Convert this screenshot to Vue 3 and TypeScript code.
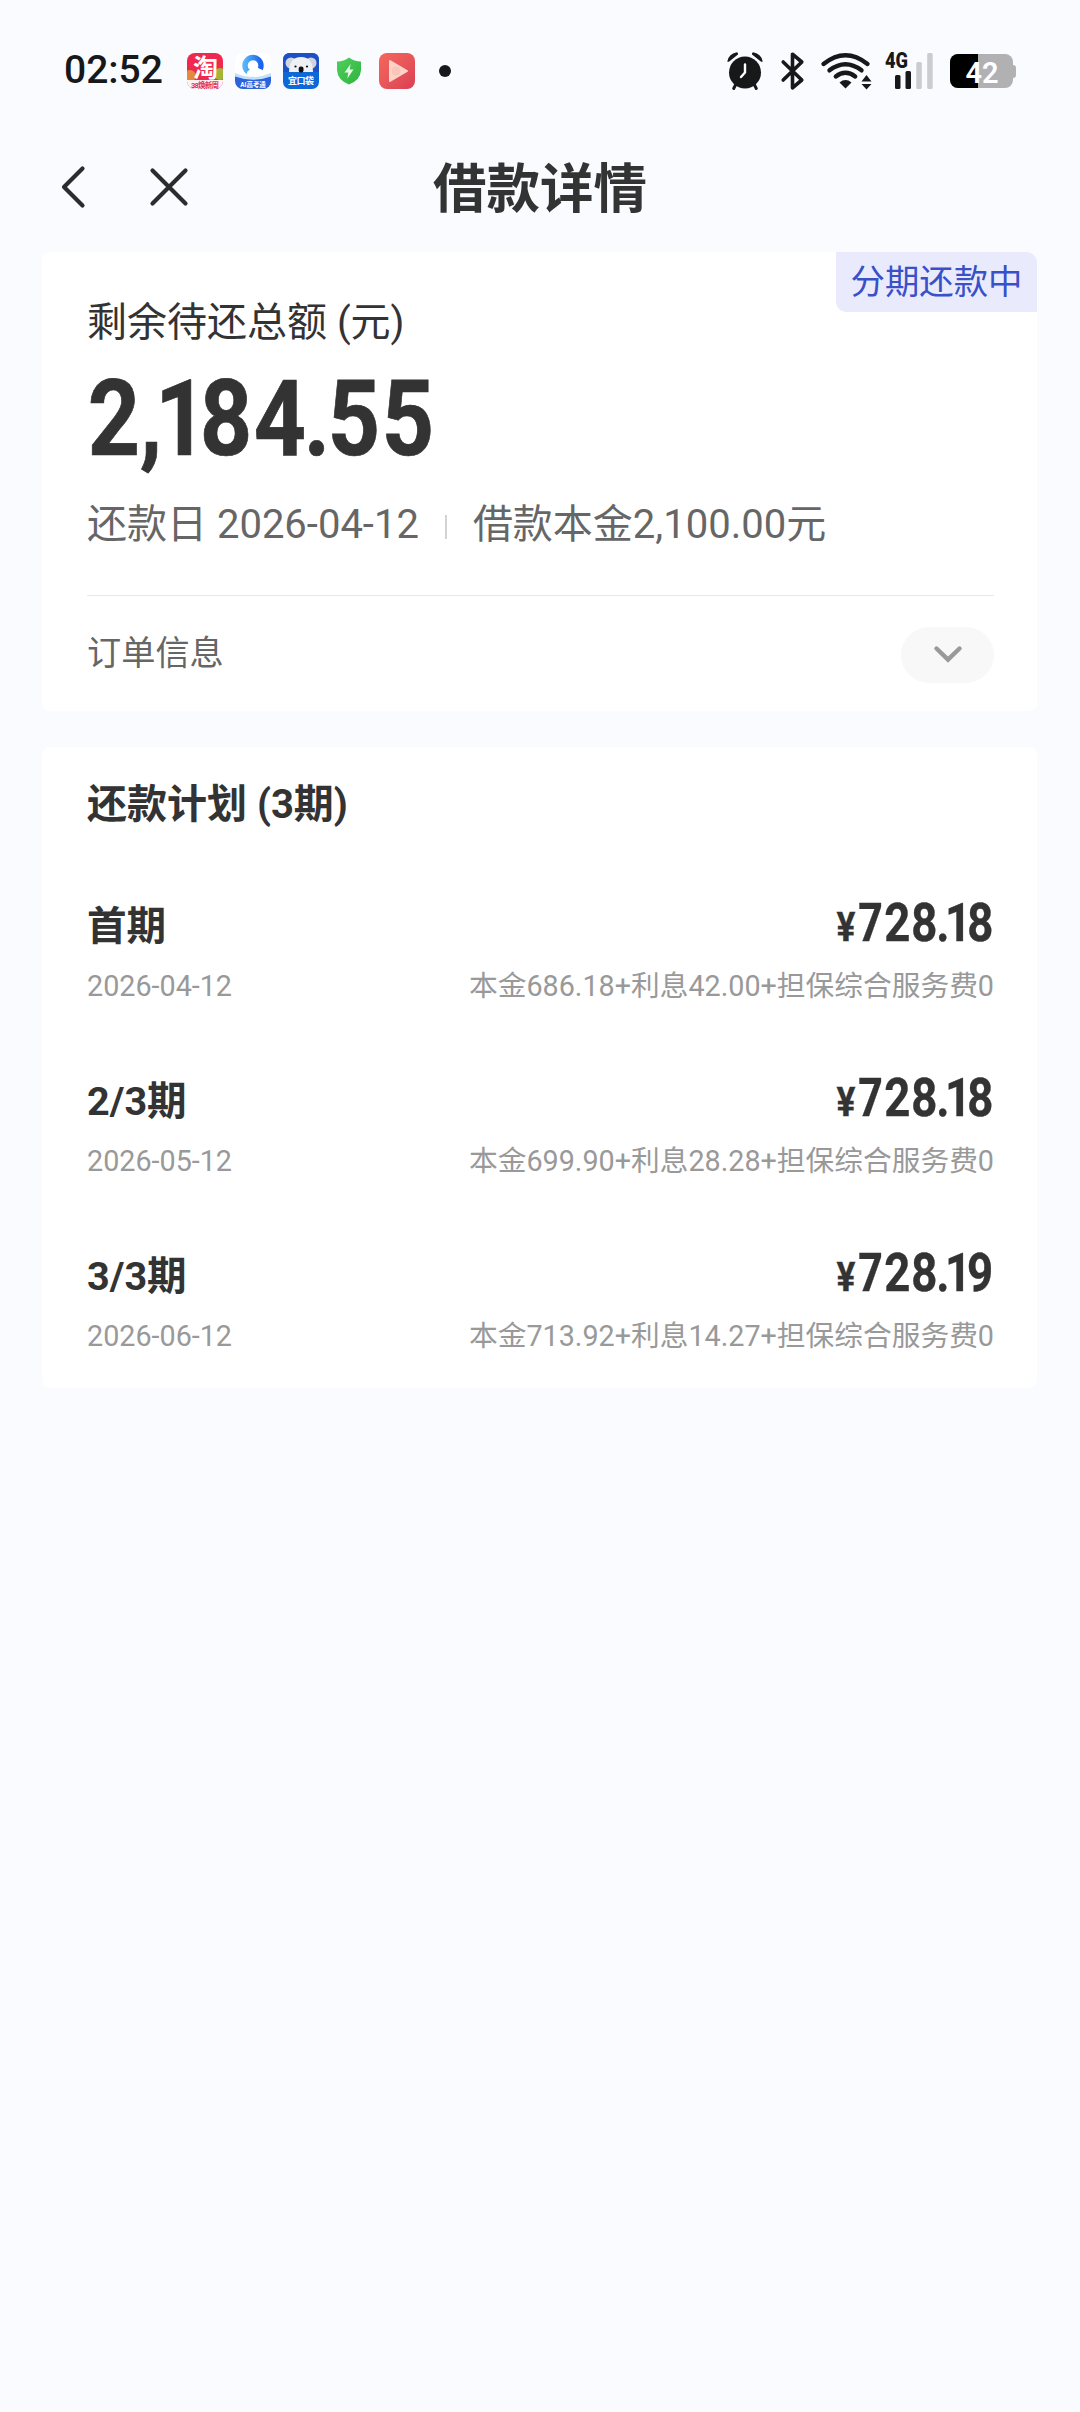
<script setup lang="ts">
interface Installment {
  name: string
  date: string
  amount: string
  detail: string
}

const total = '2,184.55'

const plan: Installment[] = [
  { name: '首期', date: '2026-04-12', amount: '728.18', detail: '本金686.18+利息42.00+担保综合服务费0' },
  { name: '2/3期', date: '2026-05-12', amount: '728.18', detail: '本金699.90+利息28.28+担保综合服务费0' },
  { name: '3/3期', date: '2026-06-12', amount: '728.19', detail: '本金713.92+利息14.27+担保综合服务费0' },
]

// Narrow characters take less room than the other figures.
function glyphClass(ch: string): string {
  if (ch === '1') return 'one'
  if (ch === ',' || ch === '.') return 'point'
  return 'figure'
}
</script>

<template>
  <div class="screen">
    <header class="status">
      <span class="time">02:52</span>
      <div class="apps">
        <svg class="app" viewBox="0 0 36 36">
          <defs>
            <clipPath id="tb"><rect width="36" height="36" rx="8" /></clipPath>
          </defs>
          <g clip-path="url(#tb)">
            <rect width="36" height="36" fill="#f0274f" />
            <circle cx="3" cy="23" r="6" fill="#e58a3c" />
            <circle cx="33" cy="21" r="6" fill="#a6b53a" />
            <rect y="27" width="36" height="9" fill="#fff3f3" />
          </g>
          <text x="18.5" y="23.500" text-anchor="middle" font-size="25" font-weight="700" fill="#fff">淘</text>
          <text x="18" y="34.5" text-anchor="middle" font-size="7.500" font-weight="700" fill="#e0305a" textLength="28">38焕新周</text>
        </svg>
        <svg class="app" viewBox="0 0 36 36">
          <defs>
            <clipPath id="qk"><rect width="36" height="36" rx="8" /></clipPath>
            <linearGradient id="ring" x1="0" y1="0" x2="1" y2="0">
              <stop offset="0" stop-color="#57b4f8" />
              <stop offset="1" stop-color="#1765ef" />
            </linearGradient>
          </defs>
          <g clip-path="url(#qk)">
            <rect width="36" height="36" fill="#fff" />
            <path d="M0 20Q18 28 36 20V36H0Z" fill="#bfe0fd" />
            <circle cx="18" cy="12.5" r="8" fill="none" stroke="url(#ring)" stroke-width="5.4" />
            <path d="M12 22Q11 17.500 16 16.500Q19 11 24 15.500Q30 17 28 22Q20 25 12 22Z" fill="#fff" />
            <path d="M0 23.500Q18 30 36 23.500V36H0Z" fill="#2c62dc" />
          </g>
          <text x="18" y="34" text-anchor="middle" font-size="6.4" font-weight="700" fill="#fff">AI高考通</text>
        </svg>
        <svg class="app" viewBox="0 0 36 36">
          <rect width="36" height="36" rx="7" fill="#0d68d8" />
          <path d="M0 19V7Q0 0 7 0H29Q36 0 36 7V19Z" fill="#1c50c4" />
          <circle cx="8" cy="10" r="5.5" fill="#cfd4dd" />
          <circle cx="28" cy="10" r="5.5" fill="#cfd4dd" />
          <path d="M6 19Q6 4 18 4Q30 4 30 19Z" fill="#eef0f4" />
          <rect x="15.7" y="13.5" width="4.8" height="6" rx="2" fill="#111" />
          <circle cx="12.5" cy="13.5" r="1.1" fill="#111" />
          <circle cx="24" cy="13.5" r="1.1" fill="#111" />
          <text x="18" y="30.500" text-anchor="middle" font-size="9" font-weight="700" fill="#fff" textLength="26">宜口袋</text>
        </svg>
        <svg class="shield" viewBox="0 0 24 28">
          <defs>
            <linearGradient id="sh" x1="0" y1="0" x2="1" y2="1">
              <stop offset="0" stop-color="#4fd05c" />
              <stop offset="1" stop-color="#2fb43f" />
            </linearGradient>
          </defs>
          <path d="M12 0.5Q17 4.3 24 4.6V13Q23.500 23 12 27.500Q.5 23 0 13V4.600Q7 4.300 12 .5Z" fill="url(#sh)" />
          <path d="M13.600 7L7.500 15.600H11.300L10.300 21.500L16.500 12.600H12.700Z" fill="#e8fbe8" />
        </svg>
        <svg class="app" viewBox="0 0 36 36">
          <defs>
            <linearGradient id="pl" x1="0" y1="0" x2="1" y2="1">
              <stop offset="0" stop-color="#f4685a" />
              <stop offset=".5" stop-color="#e9565a" />
              <stop offset="1" stop-color="#d93e52" />
            </linearGradient>
          </defs>
          <rect width="36" height="36" rx="8" fill="url(#pl)" />
          <path d="M11 8L28 18L11 28Z" fill="#fdd3c8" stroke="#fdd3c8" stroke-width="2" stroke-linejoin="round" />
          <circle cx="17" cy="18" r="4.500" fill="#fbc5bb" />
        </svg>
        <i class="dot"></i>
      </div>
      <div class="system">
        <svg class="alarm" viewBox="0 0 36 38" fill="none" stroke="#17181a">
          <circle cx="18" cy="20.500" r="16" fill="#17181a" stroke="none" />
          <path d="M0.300 9.500Q1.500 2 9.800 0.300Q11.500.8 11 2.500L2.500 9.200Q1.200 10.300.3 9.500Z" fill="#17181a" stroke="none" />
          <path d="M35.700 9.500Q34.500 2 26.200.3Q24.500.8 25 2.500L33.500 9.200Q34.800 10.300 35.700 9.500Z" fill="#17181a" stroke="none" />
          <path d="M9 32L6.700 36.500M27 32L29.300 36.500" stroke-width="3" stroke-linecap="round" />
          <path d="M18 12.500V20.500L14 25" stroke="#fff" stroke-width="2.400" stroke-linecap="round" stroke-linejoin="round" />
        </svg>
        <svg class="bluetooth" viewBox="0 0 23 38" fill="none" stroke="#17181a" stroke-width="3.600" stroke-linecap="round" stroke-linejoin="round">
          <path d="M2.200 10L20.800 28L11.500 35.800V2.200L20.800 10L2.200 28" />
        </svg>
        <svg class="wifi" viewBox="0 0 51 37" fill="none" stroke="#17181a" stroke-width="4.400" stroke-linecap="round">
          <path d="M2.500 11Q24.500 -6.500 46.500 11" />
          <path d="M8.500 17.300Q24.500 5.200 40.500 17.300" />
          <path d="M14.800 23.400Q24.500 16 34.200 23.400" />
          <path d="M24.500 35.500L18.500 29.400Q24.500 24.600 30.500 29.400Z" fill="#17181a" stroke="none" />
          <path d="M45.500 22L50.500 28.500H40.500ZM45.500 36.500L50.500 31H40.500Z" fill="#17181a" stroke="none" />
        </svg>
        <svg class="signal" viewBox="0 0 49 38">
          <text x="0" y="15.500" font-size="21.500" font-weight="900" fill="#17181a" textLength="23" lengthAdjust="spacingAndGlyphs">4G</text>
          <rect x="10" y="23" width="5.500" height="14" rx="1.500" fill="#17181a" />
          <rect x="20.500" y="19" width="5.500" height="18" rx="1.500" fill="#17181a" />
          <rect x="31.300" y="10" width="5.500" height="27" rx="1.500" fill="#cbccd0" />
          <rect x="42.200" y="1" width="5.500" height="36" rx="1.500" fill="#cbccd0" />
        </svg>
        <svg class="battery" viewBox="0 0 67 34">
          <defs>
            <clipPath id="bat"><rect width="63" height="34" rx="8" /></clipPath>
          </defs>
          <rect x="60" y="11" width="6" height="13" rx="3" fill="#b1b1b3" />
          <g clip-path="url(#bat)">
            <rect width="63" height="34" fill="#b1b1b3" />
            <rect width="28" height="34" fill="#000" />
          </g>
          <text x="32" y="28.500" text-anchor="middle" font-size="29" font-weight="600" fill="#fff">42</text>
        </svg>
      </div>
    </header>

    <nav class="nav">
      <div class="actions">
        <svg class="back" viewBox="0 0 24 42" fill="none" stroke="#2b2c2e" stroke-width="4.200" stroke-linecap="round" stroke-linejoin="round">
          <path d="M21.500 2.500L3 21L21.500 39.500" />
        </svg>
        <svg class="close" viewBox="0 0 38 38" fill="none" stroke="#2b2c2e" stroke-width="4.200" stroke-linecap="round">
          <path d="M2.500 2.500L35.500 35.500M35.500 2.500L2.500 35.500" />
        </svg>
      </div>
      <h1>借款详情</h1>
    </nav>

    <section class="card summary">
      <span class="tag">分期还款中</span>
      <div class="label">剩余待还总额 (元)</div>
      <div class="amount total"><span v-for="(ch, i) in total" :key="i" :class="glyphClass(ch)">{{ ch }}</span></div>
      <div class="meta">
        <span>还款日 2026-04-12</span>
        <i class="bar"></i>
        <span>借款本金2,100.00元</span>
      </div>
      <div class="order">
        <span>订单信息</span>
        <button class="toggle" type="button">
          <svg viewBox="0 0 28 17" fill="none" stroke="#999" stroke-width="4.400" stroke-linecap="round">
            <path d="M2.500 2.500L14 13.600L25.500 2.500" />
          </svg>
        </button>
      </div>
    </section>

    <section class="card schedule">
      <h2>还款计划 (3期)</h2>
      <div v-for="item in plan" :key="item.name" class="item">
        <div class="row main">
          <strong>{{ item.name }}</strong>
          <div class="amount"><span class="yen">¥</span><span v-for="(ch, i) in item.amount" :key="i" :class="glyphClass(ch)">{{ ch }}</span></div>
        </div>
        <div class="row sub">
          <span>{{ item.date }}</span>
          <span>{{ item.detail }}</span>
        </div>
      </div>
    </section>
  </div>
</template>

<style>
body {
  background: #fafbff;
}
</style>

<style scoped>
.screen {
  box-sizing: border-box;
  width: 1080px;
  height: 2412px;
  overflow: hidden;
  background: #fafbff;
  color: #333;
  font-family: Roboto, 'Noto Sans CJK SC', sans-serif;
}
svg {
  display: block;
  flex: none;
  overflow: visible;
}
.status {
  display: flex;
  align-items: center;
  height: 142px;
  padding: 0 63px 0 64px;
}
.time {
  width: 123px;
  font-size: 39px;
  line-height: 46px;
  padding-bottom: 2px;
  font-weight: 500;
  color: #17181a;
}
.apps {
  display: flex;
  align-items: center;
  gap: 12px;
}
.app {
  width: 36px;
  height: 36px;
}
.shield {
  width: 24px;
  height: 28px;
  margin: 0 6px;
}
.dot {
  width: 12px;
  height: 12px;
  margin-left: 12px;
  border-radius: 50%;
  background: #17181a;
}
.system {
  display: flex;
  align-items: center;
  margin-left: auto;
}
.alarm {
  width: 36px;
  height: 38px;
  margin-right: 18px;
}
.bluetooth {
  width: 23px;
  height: 38px;
  margin-right: 17px;
}
.wifi {
  width: 51px;
  height: 37px;
  margin-right: 13px;
}
.signal {
  width: 49px;
  height: 38px;
  margin-right: 16px;
}
.battery {
  width: 67px;
  height: 34px;
}
.nav {
  display: grid;
  grid-template-columns: 1fr auto 1fr;
  align-items: center;
  height: 92px;
  margin-bottom: 18px;
}
.actions {
  display: flex;
  align-items: center;
  gap: 65px;
  padding: 0 0 2px 61px;
}
.back {
  width: 24px;
  height: 42px;
}
.close {
  width: 38px;
  height: 38px;
}
h1 {
  margin: 0;
  padding-top: 4px;
  font-size: 53.500px;
  line-height: 64px;
  font-weight: 700;
}
.card {
  position: relative;
  box-sizing: border-box;
  margin: 0 43px 0 42px;
  border-radius: 8px;
  background: #fff;
}
.summary {
  height: 459px;
  padding: 47px 43px 0 45px;
}
.tag {
  position: absolute;
  top: 0;
  right: 0;
  width: 201px;
  height: 60px;
  border-radius: 0 10px 0 10px;
  background: #e9ebfc;
  color: #3a50c8;
  font-size: 34.400px;
  line-height: 61px;
  text-align: center;
}
.label {
  font-size: 40px;
  line-height: 48px;
}
.amount {
  display: flex;
  align-items: baseline;
  width: max-content;
  margin-bottom: 3px;
  font-weight: 700;
  font-size: 53px;
  line-height: 54px;
  font-variant-numeric: proportional-nums;
  white-space: nowrap;
  -webkit-text-stroke: .007em #333;
  transform: scaleX(.86);
  transform-origin: 100% 50%;
}
.amount span {
  display: flex;
  justify-content: center;
}
.figure {
  width: .592em;
}
.one {
  width: .417em;
}
.point {
  width: .22em;
}
.yen {
  width: .624em;
  font-size: 41px;
}
.total {
  margin: 19px 0 0;
  font-size: 105.500px;
  line-height: 106px;
  transform: scaleX(.864);
  transform-origin: 0 50%;
}
.meta {
  display: flex;
  align-items: center;
  height: 54px;
  margin: 26px 0 43px;
  color: #666;
  font-size: 40px;
  line-height: 54px;
}
.bar {
  width: 2px;
  height: 24px;
  margin: 4px 26px 0 26px;
  background: #d3d3d3;
}
.order {
  display: flex;
  align-items: center;
  justify-content: space-between;
  height: 115px;
  border-top: 1.500px solid #e8e8e8;
  color: #666;
  font-size: 34.200px;
}
.order span {
  padding-bottom: 7px;
}
.toggle {
  display: flex;
  align-items: center;
  justify-content: center;
  width: 93px;
  height: 56px;
  margin-top: 3px;
  padding: 0 0 2px;
  border: 0;
  border-radius: 28px;
  background: #f8f8f8;
}
.toggle svg {
  width: 28px;
  height: 17px;
}
.schedule {
  height: 641px;
  margin-top: 36px;
  padding: 33px 43px 0 45px;
}
h2 {
  margin: 0 0 66px;
  font-size: 40px;
  line-height: 50px;
  font-weight: 700;
}
.item {
  height: 175px;
}
.row {
  display: flex;
  align-items: center;
  justify-content: space-between;
}
.main {
  height: 60px;
}
.main strong {
  padding-top: 2px;
  font-size: 39.600px;
  line-height: 54px;
}
.sub {
  height: 60px;
  color: #999;
  font-size: 28.720px;
  line-height: 36px;
}
</style>
